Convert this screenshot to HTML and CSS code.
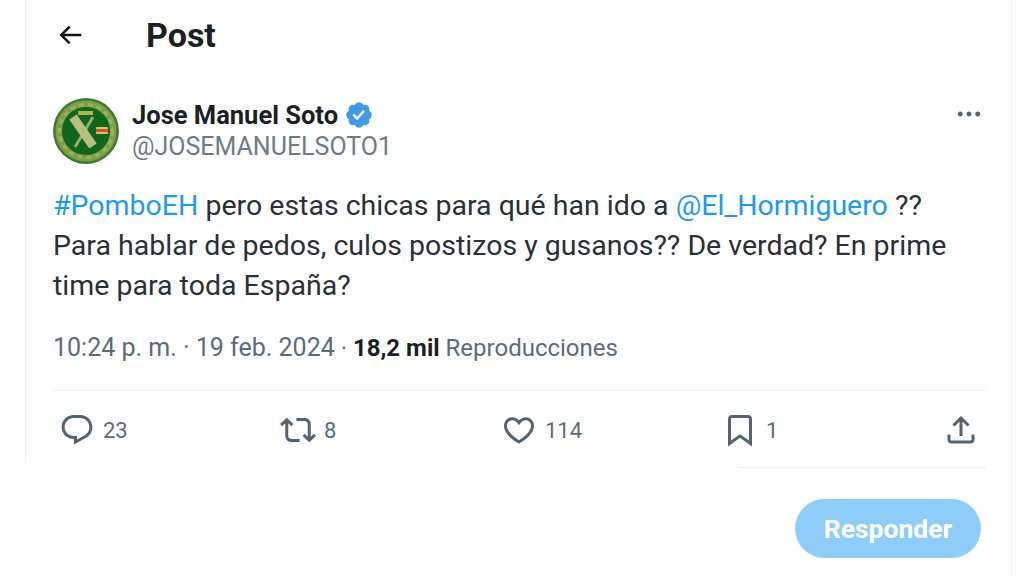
FILE: index.html
```html
<!DOCTYPE html>
<html lang="es">
<head>
<meta charset="utf-8">
<title>Post</title>
<link rel="stylesheet" href="styles.css">
</head>
<body>
<div class="page">
  <main class="column">
    <div class="thread">
      <header class="topbar">
        <svg class="back" viewBox="0 0 24 24"><path d="M7.414 13l5.043 5.04-1.414 1.42L3.586 12l7.457-7.46 1.414 1.42L7.414 11H21v2H7.414z"/></svg>
        <h1 class="title">Post</h1>
      </header>
      <article class="tweet">
        <div class="author">
          <svg class="avatar" viewBox="0 0 66 66">
            <circle cx="33" cy="33" r="33" fill="#3f7a30"/>
            <circle cx="33" cy="33" r="30.5" fill="#7c9f48"/>
            <circle cx="33" cy="33" r="26.5" fill="none" stroke="#9db25f" stroke-width="3" stroke-dasharray="5 4"/>
            <circle cx="33" cy="33" r="24" fill="#12651d"/>
            <path d="M22 49L40 19" stroke="#8fae6a" stroke-width="3"/>
            <path d="M20 19L40 48" stroke="#b9c07f" stroke-width="9"/>
            <path d="M25 13h15v4H25z" fill="#a8b94f"/>
            <rect x="43" y="29" width="12" height="7" rx="1" fill="#d8c25a"/>
            <rect x="43" y="31" width="12" height="3" fill="#d2503a"/>
          </svg>
          <div class="names">
            <div class="name-row">
              <span class="name">Jose Manuel Soto</span>
              <svg class="verified" viewBox="0 0 22 22"><path d="M20.396 11c-.018-.646-.215-1.275-.57-1.816-.354-.54-.852-.972-1.438-1.246.223-.607.27-1.264.14-1.897-.131-.634-.437-1.218-.882-1.687-.47-.445-1.053-.75-1.687-.882-.633-.13-1.29-.083-1.897.14-.273-.587-.704-1.086-1.245-1.44S11.647 1.62 11 1.604c-.646.017-1.273.213-1.813.568s-.969.854-1.24 1.44c-.608-.223-1.267-.272-1.902-.14-.635.13-1.22.436-1.69.882-.445.47-.749 1.055-.878 1.688-.13.633-.08 1.29.144 1.896-.587.274-1.087.705-1.443 1.245-.356.54-.555 1.17-.574 1.817.02.647.218 1.276.574 1.817.356.54.856.972 1.443 1.245-.224.606-.274 1.263-.144 1.896.13.634.433 1.218.877 1.688.47.443 1.054.747 1.687.878.633.132 1.29.084 1.897-.136.274.586.705 1.084 1.246 1.439.54.354 1.17.551 1.816.569.647-.016 1.276-.213 1.817-.567s.972-.854 1.245-1.44c.604.239 1.266.296 1.903.164.636-.132 1.22-.447 1.68-.907.46-.46.776-1.044.908-1.681s.075-1.299-.165-1.903c.586-.274 1.084-.705 1.439-1.246.354-.54.551-1.17.569-1.816zM9.662 14.85l-3.429-3.428 1.293-1.302 2.072 2.072 4.4-4.794 1.347 1.246z"/></svg>
            </div>
            <div class="handle">@JOSEMANUELSOTO1</div>
          </div>
          <svg class="more" viewBox="0 0 24 24"><path d="M3 12c0-1.1.9-2 2-2s2 .9 2 2-.9 2-2 2-2-.9-2-2zm9 2c1.1 0 2-.9 2-2s-.9-2-2-2-2 .9-2 2 .9 2 2 2zm7 0c1.1 0 2-.9 2-2s-.9-2-2-2-2 .9-2 2 .9 2 2 2z"/></svg>
        </div>
        <p class="body"><span class="link">#PomboEH</span> pero estas chicas para qué han ido a <span class="link">@El_Hormiguero</span> ??<br>Para hablar de pedos, culos postizos y gusanos?? De verdad? En prime<br>time para toda España?</p>
        <div class="meta"><span class="time">10:24 p. m. · 19 feb. 2024</span> · <strong class="views">18,2 mil</strong> <span class="views-label">Reproducciones</span></div>
        <div class="actions">
          <div class="action"><svg class="icon" viewBox="0 0 24 24"><path d="M1.751 10c0-4.42 3.584-8 8.005-8h4.366c4.49 0 8.129 3.64 8.129 8.13 0 2.96-1.607 5.68-4.196 7.11l-8.054 4.46v-3.69h-.067c-4.49.1-8.183-3.51-8.183-8.01zm8.005-6c-3.317 0-6.005 2.69-6.005 6 0 3.37 2.77 6.08 6.138 6.01l.351-.01h1.761v2.3l5.087-2.81c1.951-1.08 3.163-3.13 3.163-5.36 0-3.39-2.744-6.13-6.129-6.13H9.756z"/></svg><span>23</span></div>
          <div class="action"><svg class="icon" viewBox="0 0 24 24"><path d="M4.5 3.88l4.432 4.14-1.364 1.46L5.5 7.55V16c0 1.1.896 2 2 2H13v2H7.5c-2.209 0-4-1.79-4-4V7.55L1.432 9.48.068 8.02 4.5 3.88zM16.5 6H11V4h5.5c2.209 0 4 1.79 4 4v8.45l2.068-1.93 1.364 1.46-4.432 4.14-4.432-4.14 1.364-1.46 2.068 1.93V8c0-1.1-.896-2-2-2z"/></svg><span>8</span></div>
          <div class="action"><svg class="icon" viewBox="0 0 24 24"><path d="M16.697 5.5c-1.222-.06-2.679.51-3.89 2.16l-.805 1.09-.806-1.09C9.984 6.01 8.526 5.44 7.304 5.5c-1.243.07-2.349.78-2.91 1.91-.552 1.12-.633 2.78.479 4.82 1.074 1.97 3.257 4.27 7.129 6.61 3.87-2.34 6.052-4.64 7.126-6.61 1.111-2.04 1.03-3.7.477-4.82-.561-1.13-1.666-1.84-2.908-1.91zm4.187 7.69c-1.351 2.48-4.001 5.12-8.379 7.67l-.503.3-.504-.3c-4.379-2.55-7.029-5.19-8.382-7.67-1.36-2.5-1.41-4.86-.514-6.67.887-1.79 2.647-2.91 4.601-3.01 1.651-.09 3.368.56 4.798 2.01 1.429-1.45 3.146-2.1 4.796-2.01 1.954.1 3.714 1.22 4.601 3.01.896 1.81.846 4.17-.514 6.67z"/></svg><span>114</span></div>
          <div class="action"><svg class="icon" viewBox="0 0 24 24"><path d="M4 4.5C4 3.12 5.119 2 6.5 2h11C18.881 2 20 3.12 20 4.5v18.44l-8-5.71-8 5.71V4.5zM6.5 4c-.276 0-.5.22-.5.5v14.56l6-4.29 6 4.29V4.5c0-.28-.224-.5-.5-.5h-11z"/></svg><span>1</span></div>
          <div class="action"><svg class="icon" viewBox="0 0 24 24"><path d="M12 2.59l5.7 5.7-1.41 1.42L13 6.41V16h-2V6.41l-3.3 3.3-1.41-1.42L12 2.59zM21 15l-.02 3.51c0 1.38-1.12 2.49-2.5 2.49H5.5C4.11 21 3 19.88 3 18.5V15h2v3.5c0 .28.22.5.5.5h12.98c.28 0 .5-.22.5-.5L19 15h2z"/></svg></div>
        </div>
      </article>
    </div>
    <div class="composer">
      <div class="composer-rule"></div>
      <button class="reply" type="button">Responder</button>
    </div>
  </main>
</div>
</body>
</html>
```
FILE: styles.css
```css
* { box-sizing: border-box; }
html, body { margin: 0; padding: 0; background: #fff; }
body { font-family: Roboto, "Noto Sans", sans-serif; color: #0f1419; }
.page { width: 1024px; height: 576px; overflow: hidden; padding-left: 25px; }
.column { width: 987px; height: 576px; border-right: 1px solid #eff3f4; display: flex; flex-direction: column; }
.thread { height: 463px; border-left: 1px solid #eff3f4; padding: 0 25px 0 27px; }
.topbar { height: 69px; display: flex; align-items: center; }
.back { width: 30px; height: 30px; margin-left: 2px; fill: #0f1419; }
.title { margin: 0 0 0 61px; font-size: 34px; font-weight: 700; line-height: 40px; color: #1a1f23; }
.author { display: flex; align-items: flex-start; margin-top: 28px; height: 67px; }
.avatar { width: 66px; height: 66px; margin-top: 1px; flex: none; }
.names { margin-left: 13px; flex: 1; padding-top: 1px; }
.name-row { display: flex; align-items: center; height: 33px; }
.name { font-size: 25.5px; font-weight: 700; line-height: 32px; color: #1a1f23; }
.verified { width: 30px; height: 30px; margin-left: 6px; fill: #3f9be8; }
.handle { font-size: 25px; line-height: 32px; color: #6f7b84; }
.more { width: 30px; height: 30px; margin-top: 2px; fill: #536471; margin-right: 2px; }
.body { margin: 22px 0 0; font-size: 28.5px; line-height: 40px; color: #2a3035; white-space: nowrap; }
.link { color: #1d9bf0; }
.meta { margin-top: 22px; height: 63px; font-size: 24px; line-height: 40px; color: #5c6c78; border-bottom: 1px solid #eff3f4; white-space: nowrap; }
.time { font-size: 25px; }
.views { font-weight: 700; color: #1a1f23; }
.actions { margin-top: 19px; margin-left: 6px; display: grid; grid-template-columns: repeat(5, 221px); }
.action { display: flex; align-items: center; gap: 8px; font-size: 22px; color: #5c6c78; height: 40px; }
.icon { width: 36px; height: 36px; fill: #536471; flex: none; }
.composer { display: flex; flex-direction: column; align-items: flex-end; padding-right: 30px; }
.composer-rule { width: 248px; height: 1px; background: #eff3f4; margin: 4px -6px 0 0; }
.reply { margin-top: 31px; width: 186px; height: 59px; border: 0; border-radius: 30px; background: #8ecdf8; color: #fff; font: 700 26.5px Roboto, "Noto Sans", sans-serif; }
```
